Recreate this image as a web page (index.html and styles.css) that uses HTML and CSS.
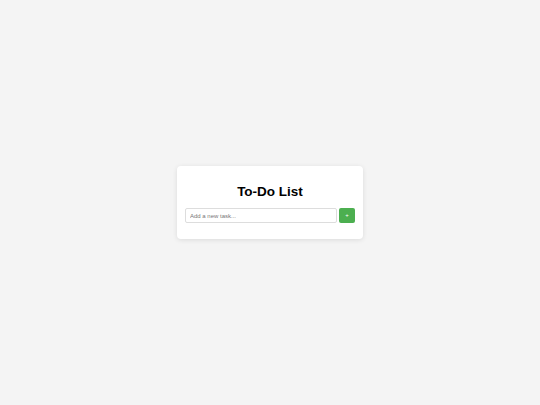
FILE: index.html
```html
<!DOCTYPE html>
<html>
<head>
<meta charset="utf-8">
<link rel="stylesheet" href="styles.css">
</head>
<body>
<div class="card">
  <h1 class="title">To-Do List</h1>
  <div class="row">
    <input class="task-input" type="text" placeholder="Add a new task...">
    <button class="add-btn">+</button>
  </div>
  <ul class="list"></ul>
</div>
</body>
</html>
```
FILE: styles.css
```css
html, body {
  margin: 0;
  padding: 0;
  height: 100%;
}
body {
  background: #f4f4f4;
  font-family: "Liberation Sans", Arial, sans-serif;
  display: flex;
  align-items: center;
  justify-content: center;
}
.card {
  width: 170px;
  background: #ffffff;
  padding: 8px;
  border-radius: 4px;
  box-shadow: 0 1px 5px rgba(0,0,0,0.1);
}
.title {
  margin: 9px 0 8px;
  font-size: 13.5px;
  line-height: 17px;
  font-weight: bold;
  text-align: center;
  color: #000;
}
.row {
  display: flex;
  gap: 2px;
  margin-bottom: 8px;
}
.task-input {
  flex: 1;
  min-width: 0;
  height: 15px;
  box-sizing: border-box;
  border: 1px solid #dddddd;
  border-radius: 2px;
  padding: 0 4px;
  font-family: "Liberation Sans", Arial, sans-serif;
  font-size: 6px;
  color: #333;
  outline: none;
}
.task-input::placeholder {
  color: #777;
}
.add-btn {
  width: 16px;
  height: 15px;
  padding: 0;
  border: none;
  border-radius: 2px;
  background: #4caf50;
  color: #ffffff;
  font-family: "Liberation Sans", Arial, sans-serif;
  font-size: 6px;
  line-height: 15px;
}
.list {
  display: none;
}
```
